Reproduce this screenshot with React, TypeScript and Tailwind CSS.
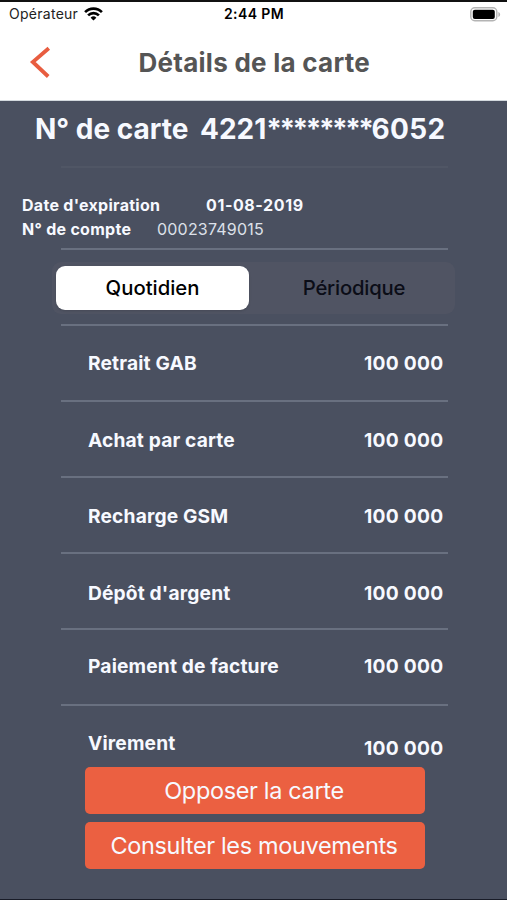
import clsx from "clsx";

const limits = [
    { label: "Retrait GAB", value: "100 000", pad: "pt-6" },
    { label: "Achat par carte", value: "100 000", pad: "pt-[25px]" },
    { label: "Recharge GSM", value: "100 000", pad: "pt-[25px]" },
    { label: "Dépôt d'argent", value: "100 000", pad: "pt-[26px]" },
    { label: "Paiement de facture", value: "100 000", pad: "pt-[23px]" },
    { label: "Virement", value: "100 000", pad: "pt-6", valuePad: "pt-[5px]" },
];

function WifiIcon() {
    return (
        <svg width="19" height="14" viewBox="0 0 19 14" fill="none" stroke="#000" strokeWidth="2.6">
            <path d="M1.1 5.1a11.8 11.8 0 0 1 16.8 0" />
            <path d="M4.1 8.4a7.6 7.6 0 0 1 10.8 0" />
            <path d="M9.5 13.6 6.6 10.7a4.1 4.1 0 0 1 5.8 0Z" fill="#000" stroke="none" />
        </svg>
    );
}

function BatteryIcon() {
    return (
        <svg width="31" height="15" viewBox="0 0 31 15">
            <rect x="0.8" y="0.8" width="26" height="13" rx="4" fill="#fff" stroke="#b4b4b4" strokeWidth="1.4" />
            <rect x="2.8" y="2.7" width="22" height="9.2" rx="2" fill="#000" />
            <path d="M28.4 4.9c2.3.9 2.3 4.1 0 5Z" fill="#b4b4b4" />
        </svg>
    );
}

function StatusBar() {
    return (
        <div className="grid h-[23px] grid-cols-3 items-center pl-[9px] pr-[6px]">
            <div className="flex items-center gap-1.5">
                <span className="text-[14px] leading-6 tracking-[0.27px] text-[#222]">Opérateur</span>
                <WifiIcon />
            </div>
            <span className="-ml-0.5 text-center text-[14px] font-semibold leading-6 tracking-[0.4px] text-black">2:44 PM</span>
            <div className="flex justify-end">
                <BatteryIcon />
            </div>
        </div>
    );
}

function Divider({ faint = false }: { faint?: boolean }) {
    return <div className={clsx("ml-[61px] h-0.5 w-[387px] shrink-0", faint ? "bg-[#505665]" : "bg-[#697080]")} />;
}

export default function App() {
    return (
        <div className="flex h-[900px] w-[507px] flex-col overflow-hidden border-b border-[#191c28] bg-[#4a5060] font-['Inter','Liberation_Sans',sans-serif] text-[#f7f9ff]">
            <header className="h-[101px] shrink-0 border-b border-[#d3d9de] border-t-2 border-t-[#111] bg-white">
                <StatusBar />
                <div className="flex h-[75px] items-center">
                    <button className="ml-[28px] w-6" aria-label="Retour">
                        <svg width="24" height="34" viewBox="0 0 24 34" fill="none" stroke="#e85d40" strokeWidth="3.8">
                            <path d="M20.8 2.3 4.8 16 20.2 30.5" />
                        </svg>
                    </button>
                    <h1 className="ml-[86.5px] whitespace-nowrap text-[26px] font-bold leading-8 tracking-[0.26px] text-[#555]">
                        Détails de la carte
                    </h1>
                </div>
            </header>

            {/* Card identity */}
            <div className="flex h-[65px] shrink-0 pl-[35px] pt-2.5 text-[28px] font-bold leading-9">
                <span className="w-[165px] whitespace-nowrap">N° de carte</span>
                <span className="whitespace-nowrap">
                    4221<span className="tracking-[-2.5px]">********</span>
                    <span className="tracking-[0.3px]">6052</span>
                </span>
            </div>
            <Divider faint />
            <div className="h-20 shrink-0 pl-[22px] pt-[25px] text-[16px] leading-6">
                <div className="flex font-bold">
                    <span className="w-[184px] tracking-[0.28px]">Date d'expiration</span>
                    <span className="tracking-[0.6px]">01-08-2019</span>
                </div>
                <div className="flex">
                    <span className="w-[135px] font-bold tracking-[0.28px]">N° de compte</span>
                    <span className="tracking-[0.2px] text-[#dde0e9]">00023749015</span>
                </div>
            </div>
            <Divider />

            {/* Limit period switch */}
            <div className="h-[74px] shrink-0 px-[52px] pt-3">
                <div className="flex h-[52px] rounded-[9px] bg-[#505463] p-1 text-[20.3px] font-medium">
                    <button className="h-11 w-[193px] rounded-[9px] bg-white text-black shadow-sm">Quotidien</button>
                    <button className="h-11 flex-1 pl-2 tracking-[-0.2px] text-[#0b0d17]">Périodique</button>
                </div>
            </div>

            {limits.map((limit) => (
                <div key={limit.label} className={clsx("shrink-0", limit.label === "Virement" ? "h-[63px]" : "h-[76px]")}>
                    <Divider />
                    <div className={clsx("flex justify-between pl-[88px] pr-[63.5px] text-[19.2px] font-bold leading-[26px]", limit.pad)}>
                        <span className="tracking-[0.15px]">{limit.label}</span>
                        <span className={clsx("tracking-[0.3px]", limit.valuePad)}>{limit.value}</span>
                    </div>
                </div>
            ))}

            <div className="flex flex-col gap-2 pl-[85px] pr-[82px] text-[23.5px] tracking-[-0.35px]">
                <button className="h-[47px] rounded-[5px] bg-[#eb6041] pr-0.5">Opposer la carte</button>
                <button className="h-[47px] rounded-[5px] bg-[#eb6041] pr-0.5">Consulter les mouvements</button>
            </div>
        </div>
    );
}
